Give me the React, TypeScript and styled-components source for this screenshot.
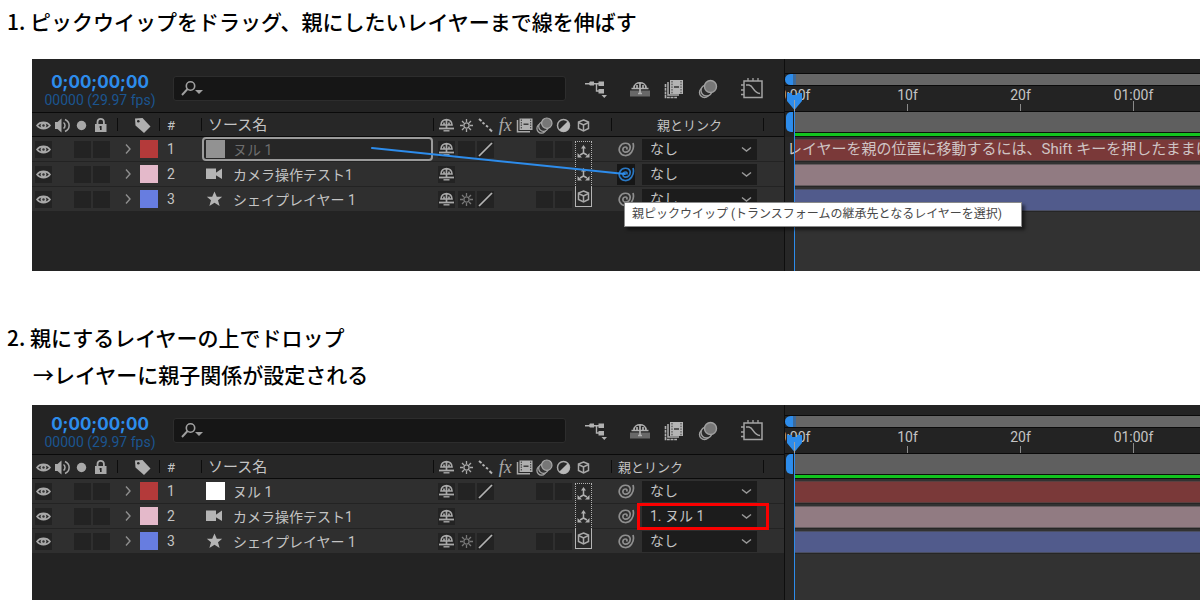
import React from "react";
import styled, { createGlobalStyle, css } from "styled-components";

const GlobalStyle = createGlobalStyle`
  *, *::before, *::after { box-sizing: border-box; }
  body {
    margin: 0;
    background: #fff;
    color: #000;
    font-family: "Noto Sans CJK JP", "Noto Sans", sans-serif;
  }
  button, input, select { font: inherit; color: inherit; margin: 0; padding: 0; border: 0; background: none; }
  svg { display: block; }
`;

const UI_FONT = `Roboto, "Noto Sans CJK JP", sans-serif`;
const BLUE = "#2d8ceb";
const ICON = "#a9a9a9";

/* ---------- page ---------- */

const Page = styled.main`
  height: 100vh;
  overflow: hidden;
`;

const Caption = styled.h2`
  margin: 0;
  padding-left: 7px;
  font-size: 21px;
  font-weight: 500;
  line-height: 36px;
`;

const FirstStep = styled.section`
  padding-top: 3px;
`;

const SecondStep = styled.section`
  margin-top: 48px;
`;

const Result = styled.p`
  margin: 0;
  padding-left: 33px;
  font-size: 21px;
  font-weight: 500;
  line-height: 38px;
`;

const Panel = styled.div<{ $gap: number; $height: number }>`
  position: relative;
  display: flex;
  min-height: ${(p) => p.$height}px;
  margin: ${(p) => p.$gap}px 0 0 32px;
  background: #232323;
  color: #c4c4c4;
  font-family: ${UI_FONT};
  overflow: hidden;
`;

/* ---------- left pane ---------- */

const LayerPane = styled.div`
  flex: 0 0 753px;
  border-right: 1px solid #0e0e0e;
`;

const Toolbar = styled.div<{ $height: number }>`
  display: flex;
  align-items: flex-end;
  height: ${(p) => p.$height}px;
  padding-bottom: 4px;
  border-bottom: 1px solid #0a0a0a;
`;

const Timecode = styled.div`
  width: 136px;
  text-align: center;
  white-space: nowrap;
`;

const Current = styled.div`
  color: ${BLUE};
  font-family: Inter, sans-serif;
  font-size: 17px;
  font-weight: 700;
  line-height: 20px;
`;

const FrameInfo = styled.div`
  color: #1b5590;
  font-size: 14px;
  line-height: 16px;
`;

const SearchBox = styled.label`
  display: flex;
  align-items: center;
  gap: 4px;
  width: 393px;
  height: 25px;
  margin: 0 19px 7px 5px;
  padding-left: 7px;
  border: 1px solid #2d2d2d;
  border-radius: 3px;
  background: #161616;
`;

const SearchInput = styled.input`
  flex: 1;
  min-width: 0;
  height: 20px;
  font-size: 14px;
  outline: none;
`;

const Tools = styled.div`
  display: flex;
  gap: 22px;
  margin-bottom: 7px;
`;

const ToolGroup = styled.div`
  display: flex;
  gap: 12px;
`;

const ToolButton = styled.button`
  display: grid;
  place-items: center;
  width: 22px;
  height: 25px;
`;

const LayerTable = styled.table`
  width: 752px;
  table-layout: fixed;
  border-spacing: 0;
`;

const HeadCell = styled.th<{ $indent?: number; $size?: number }>`
  height: 24px;
  padding: 2px 0 0 ${(p) => p.$indent ?? 0}px;
  border-bottom: 1px solid #0a0a0a;
  background: linear-gradient(#0c0c0c, #0c0c0c) right center / 1px 13px no-repeat #272727;
  font-size: ${(p) => p.$size ?? 15}px;
  font-weight: 400;
  line-height: 21px;
  text-align: left;
  white-space: nowrap;

  &:last-child { background: #272727; }
`;

const Cell = styled.td<{ $indent?: number }>`
  height: 25px;
  padding: 0 0 0 ${(p) => p.$indent ?? 0}px;
  border-bottom: 1px solid #232323;
  background: #2f2f2f;
  font-size: 14px;
  line-height: 23px;
  white-space: nowrap;
`;

const HeadIcons = styled.div`
  display: flex;
  gap: 2px;
  padding-left: 3px;
`;

const HeadTag = styled.div`
  display: flex;
  justify-content: flex-end;
  padding-right: 9px;
`;

const Toggles = styled.div`
  display: flex;
  gap: 2px;
  padding-left: 3px;
`;

const SwitchGrid = styled.div<{ $height: number }>`
  display: grid;
  grid-template-columns: repeat(8, 1fr);
  align-items: center;
  justify-items: center;
  width: 156px;
  height: ${(p) => p.$height}px;
  margin-left: 3px;
`;

const Switch = styled.button<{ $apart?: boolean }>`
  display: grid;
  place-items: center;
  width: 17px;
  height: 17px;
  background: #232323;
  ${(p) => p.$apart && css`margin-right: 20px;`}
`;

const Blank = styled.span``;

const AxisBox = styled.button<{ $edge: "top" | "middle" | "bottom" }>`
  display: grid;
  place-items: center;
  width: 17px;
  height: ${(p) => (p.$edge === "middle" ? 25 : 20)}px;
  border: 1px dotted #b4b4b4;
  border-top-width: ${(p) => (p.$edge === "top" ? 1 : 0)}px;
  border-bottom-width: ${(p) => (p.$edge === "bottom" ? 1 : 0)}px;
  border-style: ${(p) => (p.$edge === "bottom" ? "solid" : "dotted")};
  background: #292929;
  align-self: ${(p) => (p.$edge === "top" ? "end" : p.$edge === "bottom" ? "start" : "center")};
`;

const LabelCell = styled.div`
  display: flex;
  align-items: center;
  justify-content: flex-end;
  gap: 8px;
  padding-right: 2px;
`;

const ColorLabel = styled.button<{ $color: string }>`
  width: 18px;
  height: 18px;
  background: ${(p) => p.$color};
`;

const Twirl = styled.button`
  width: 8px;
  height: 12px;
`;

const SourceName = styled.div<{ $picked?: boolean }>`
  display: flex;
  align-items: center;
  gap: 8px;
  height: 24px;
  margin-right: 1px;
  padding-left: 2px;
  border: 2px solid ${(p) => (p.$picked ? "#9b9b9b" : "transparent")};
  border-radius: 4px;
  background: ${(p) => (p.$picked ? "#262626" : "transparent")};
  color: ${(p) => (p.$picked ? "#6d6d6d" : "#c4c4c4")};
`;

const LayerName = styled.span`
  padding-top: 2px;
`;

const SourceIcon = styled.span`
  width: 19px;
`;

const Solid = styled.span<{ $color: string }>`
  display: block;
  width: 19px;
  height: 18px;
  background: ${(p) => p.$color};
`;

const ParentCell = styled.div`
  display: flex;
  align-items: center;
  gap: 7px;
  padding-left: 5px;
`;

const PickWhip = styled.button<{ $active?: boolean }>`
  display: grid;
  place-items: center;
  width: 18px;
  height: 21px;
  background: ${(p) => (p.$active ? "#161616" : "transparent")};
`;

const ParentField = styled.div<{ $marked?: boolean }>`
  position: relative;
  display: flex;
  align-items: center;
  width: 115px;
  height: 21px;
  background: #1c1c1c;

  svg { position: absolute; right: 5px; pointer-events: none; }

  ${(p) =>
    p.$marked &&
    css`
      &::after {
        content: "";
        position: absolute;
        inset: -3px -12px -3px -5px;
        border: 3px solid #fa0000;
        pointer-events: none;
      }
    `}
`;

const ParentSelect = styled.select`
  appearance: none;
  width: 100%;
  height: 21px;
  padding-left: 8px;
  font-size: 14px;
  line-height: 21px;
  outline: none;
`;

/* ---------- timeline ---------- */

const Timeline = styled.div`
  position: relative;
  flex: 1;
  min-width: 0;
  display: flex;
  flex-direction: column;
  overflow: hidden;
`;

const TimelineHead = styled.div<{ $height: number }>`
  display: flex;
  flex-direction: column;
  justify-content: flex-end;
  height: ${(p) => p.$height}px;
`;

const Navigator = styled.div`
  display: flex;
  height: 13px;
  border: solid #0a0a0a;
  border-width: 1px 0;
`;

const NavHandle = styled.div`
  width: 8px;
  border-radius: 8px 0 0 8px;
  background: ${BLUE};
`;

const NavEdge = styled.div`
  width: 3px;
  background: #3c6a9c;
`;

const NavTrack = styled.div`
  flex: 1;
  background: #666;
`;

const Ruler = styled.ol`
  display: flex;
  height: 26px;
  margin: 0 0 0 -47px;
  padding: 0;
  border-bottom: 1px solid #0a0a0a;
  list-style: none;
`;

const Mark = styled.li<{ $major?: boolean }>`
  flex: 0 0 113px;
  height: 25px;
  background: linear-gradient(#8a8a8a, #8a8a8a) center bottom / 1px ${(p) => (p.$major ? 10 : 7)}px no-repeat;
  font-size: 14px;
  line-height: 19px;
  text-align: center;
`;

const WorkArea = styled.div`
  display: flex;
  height: 20px;
  padding-left: 1px;
`;

const WorkHandle = styled.div`
  width: 7px;
  margin-right: 2px;
  border-radius: 5px 0 0 5px;
  background: ${BLUE};
`;

const WorkTrack = styled.div`
  flex: 1;
  background: #5f5f5f;
`;

const CacheBar = styled.div`
  height: 5px;
  margin-left: 10px;
  border: solid #0c120c;
  border-width: 1px 0;
  background: #12c41e;
`;

const Tracks = styled.div`
  flex: 1;
  border-left: 9px solid #272727;
  background: #323232;
`;

const Track = styled.div`
  height: 25px;
  padding: 2px 0 0 1px;
  border-bottom: 1px solid #262626;
`;

const Bar = styled.div<{ $color: string }>`
  height: 22px;
  border: solid rgba(70, 70, 70, 0.6);
  border-width: 1px 0;
  background: ${(p) => p.$color};
`;

const Hint = styled.div`
  position: absolute;
  top: 78px;
  left: 2px;
  color: #cfc4c4;
  font-size: 15px;
  line-height: 24px;
  white-space: nowrap;
`;

const Playhead = styled.div<{ $top: number }>`
  position: absolute;
  top: ${(p) => p.$top}px;
  bottom: 0;
  left: 2px;
  width: 15px;
  background: linear-gradient(${BLUE}, ${BLUE}) 7px 16px / 1px 100% no-repeat;
`;

/* ---------- overlays ---------- */

const WhipLine = styled.svg`
  position: absolute;
  left: 338px;
  top: 87px;
`;

const Tooltip = styled.div`
  position: absolute;
  left: 592px;
  top: 143px;
  min-width: 398px;
  padding: 0 7px;
  border: 1px solid #8a8a8a;
  background: #fff;
  box-shadow: 3px 3px 3px rgba(0, 0, 0, 0.5);
  color: #484848;
  font-size: 12px;
  line-height: 23px;
  white-space: nowrap;
`;

/* ---------- icons ---------- */

const Eye = () => (
  <svg width="17" height="17" viewBox="0 0 17 17" fill="none">
    <path d="M2 8.5C5 4.3 12 4.3 15 8.5C12 12.7 5 12.7 2 8.5Z" stroke={ICON} strokeWidth="1.6" />
    <circle cx="8.5" cy="8.5" r="2.9" fill={ICON} />
    <circle cx="8.5" cy="8.5" r="1.2" fill="#333" />
  </svg>
);

const Speaker = () => (
  <svg width="17" height="17" viewBox="0 0 17 17" fill="none" stroke={ICON} strokeWidth="1.5">
    <path d="M1 5H3.500L7.500 1.500V15.500L3.500 12H1Z" fill={ICON} stroke="none" />
    <path d="M9.500 5.500C11.500 7 11.500 10 9.500 11.500M11 2.500C16.500 5 16.500 12 11 14.500" />
  </svg>
);

const Dot = () => (
  <svg width="17" height="17" viewBox="0 0 17 17">
    <circle cx="8.5" cy="8.5" r="4.7" fill={ICON} />
  </svg>
);

const Lock = () => (
  <svg width="17" height="17" viewBox="0 0 17 17">
    <path d="M5.500 8V5a3.200 3.200 0 0 1 6.400 0V8" fill="none" stroke={ICON} strokeWidth="1.8" />
    <rect x="3" y="7" width="11.5" height="8" fill={ICON} />
    <path d="M8.800 9v4M7.500 10h2" stroke="#222" strokeWidth="1.6" />
  </svg>
);

const Tag = () => (
  <svg width="17" height="17" viewBox="0 0 17 17">
    <path d="M1 1.500L8.500 1L16.500 9.500L10 16L1.500 8.500Z" fill="#b0b0b0" />
    <circle cx="4.3" cy="4.3" r="1.3" fill="#272727" />
  </svg>
);

const Shy = () => (
  <svg width="17" height="17" viewBox="0 0 17 17" fill="none" stroke={ICON} strokeWidth="1.7">
    <path d="M3 8C3 0.800 14 0.800 14 8ZM8.500 3V12M6 5.500V8M11 5.500V8" />
    <path d="M1 11.500H16" strokeWidth="1.800" />
    <path d="M5.500 13.800H11.500" strokeWidth="1.400" />
  </svg>
);

const Sun = ({ color = ICON }: { color?: string }) => (
  <svg width="17" height="17" viewBox="0 0 17 17" fill="none" stroke={color} strokeWidth="1.3">
    <circle cx="8.5" cy="8.5" r="2.6" />
    <path d="M8.500 2V5M8.500 12V15M2 8.500H5M12 8.500H15M4 4L6 6M11 11L13 13M13 4L11 6M6 11L4 13" />
  </svg>
);

const DashSlope = () => (
  <svg width="17" height="17" viewBox="0 0 17 17" fill="none" stroke="#b4b4b4" strokeWidth="2">
    <path d="M2 2L4.500 4M5.500 5.500L7.500 7M9 8.500L11 10M12.500 12L15 14.500" />
  </svg>
);

const Slope = () => (
  <svg width="17" height="17" viewBox="0 0 17 17">
    <path d="M2 15L15 2" stroke="#b4b4b4" strokeWidth="1.7" />
  </svg>
);

const Film = () => (
  <svg width="17" height="17" viewBox="0 0 17 17">
    <path d="M1.500 3V14.800H14" fill="none" stroke={ICON} strokeWidth="1.5" />
    <rect x="3.5" y="1.5" width="13" height="11.5" fill="#b0b0b0" />
    <path d="M5.300 2.500V12M14.700 2.500V12" stroke="#3a3a3a" strokeWidth="1" strokeDasharray="1.500 1" />
    <path d="M7.500 7.200H12.500" stroke="#2b2b2b" strokeWidth="1.300" />
  </svg>
);

const MotionBlur = () => (
  <svg width="17" height="17" viewBox="0 0 17 17" stroke={ICON} strokeWidth="1.2">
    <circle cx="5.5" cy="11.5" r="4.6" fill="#333" />
    <circle cx="7.5" cy="9.5" r="4.8" fill="#333" />
    <circle cx="10.8" cy="6.2" r="5.2" fill="#777" />
  </svg>
);

const Adjust = () => (
  <svg width="17" height="17" viewBox="0 0 17 17">
    <circle cx="8.5" cy="8.5" r="6" fill="none" stroke={ICON} strokeWidth="1.5" />
    <path d="M4.200 12.800A6 6 0 0 0 14.500 8.500A6 6 0 0 0 12.800 4.200Z" fill="#b8b8b8" />
  </svg>
);

const Cube = () => (
  <svg width="15" height="15" viewBox="0 0 15 15" fill="none" stroke={ICON} strokeWidth="1.5">
    <path d="M7.500 2L12.500 4V10.500L7.500 13L2.500 10.500V4Z" />
    <path d="M2.500 4.500L7.500 7L12.500 4.500M7.500 7V13" />
  </svg>
);

const Axis = () => (
  <svg width="15" height="15" viewBox="0 0 15 15" fill="#b0b0b0">
    <path d="M7.500 3V9L4 11M7.500 9L11 11" stroke="#b0b0b0" strokeWidth="1.5" fill="none" />
    <path d="M7.500 1L10 4.500H5Z" />
    <path d="M1.500 9V13.500H6ZM13.500 9V13.500H9Z" />
  </svg>
);

const Spiral = ({ color = "#8f8f8f" }: { color?: string }) => (
  <svg width="17" height="17" viewBox="0 0 17 17" fill="none" stroke={color} strokeWidth="1.7">
    <path d="M15 2C17 9 12 15 7 14.500C2 14 0 9 2 5.500C4 1.500 10.500 1 12 5C13 9 9.500 11.800 6.500 11C4 10 4.500 6 7.500 6C9 6 9.500 7.500 8.500 8.500" />
  </svg>
);

const Camera = () => (
  <svg width="17" height="12" viewBox="0 0 17 12" fill="#b4b4b4">
    <path d="M0 0.500H10V11H0ZM9.500 5L16 0.500V11L9.500 7Z" />
  </svg>
);

const Star = () => (
  <svg width="17" height="16" viewBox="0 0 17 16" fill="#b4b4b4">
    <path d="M8.500 0.500L10.800 5.700H16.200L12 9.300L13.600 15L8.500 11.700L3.400 15L5 9.300L0.800 5.700H6.200Z" />
  </svg>
);

const ChevronDown = () => (
  <svg width="11" height="7" viewBox="0 0 11 7" fill="none" stroke="#9a9a9a" strokeWidth="1.4">
    <path d="M1 1.500L5.500 5L10 1.500" />
  </svg>
);

const ChevronRight = () => (
  <svg width="8" height="12" viewBox="0 0 8 12" fill="none" stroke="#8f8f8f" strokeWidth="1.4">
    <path d="M2 1.500L6 6L2 10.500" />
  </svg>
);

const Magnifier = () => (
  <svg width="22" height="17" viewBox="0 0 22 17" fill="none" stroke="#a0a0a0">
    <circle cx="9.5" cy="6" r="4.2" strokeWidth="1.6" />
    <path d="M6.500 9L1 15" strokeWidth="1.9" />
    <path d="M14 10H22L18 14Z" fill="#a0a0a0" stroke="none" />
  </svg>
);

const FlowTree = () => (
  <svg width="22" height="18" viewBox="0 0 22 18" fill="#b0b0b0">
    <path d="M0 3L4 3L5 1.500H9V5.500H5L4 4.500H0ZM13.500 1.500H19V6H13.500ZM13.500 9H19V13.500H13.500ZM16.500 15H22L19.250 18Z" />
    <path d="M8 3.700H14M11.500 4V11H14" fill="none" stroke="#b0b0b0" strokeWidth="1.400" />
  </svg>
);

const HideShy = () => (
  <svg width="22" height="18" viewBox="0 0 22 18">
    <path d="M1 10.500H21V16.500H1Z" fill="#686868" />
    <path d="M5 8C5 1 17 1 17 8M2.500 8.500H19.500M11 3V13.500M8 5V8M14 5V8" fill="none" stroke="#b0b0b0" strokeWidth="1.700" />
    <path d="M9 13.500H13" stroke="#b0b0b0" strokeWidth="1.500" />
  </svg>
);

const FrameBlend = () => (
  <svg width="20" height="20" viewBox="0 0 20 20">
    <path d="M1.500 5V18.500H13" fill="none" stroke="#b0b0b0" strokeWidth="1.600" strokeDasharray="3 0.700" />
    <path d="M4 3V16H15" fill="none" stroke="#b0b0b0" strokeWidth="1.500" />
    <rect x="6" y="1" width="13" height="14" fill="#b4b4b4" />
    <path d="M8 2V15M17 2V15" stroke="#3a3a3a" strokeWidth="1" strokeDasharray="1.500 1.200" />
    <path d="M10 8H15" stroke="#2b2b2b" strokeWidth="1.400" />
  </svg>
);

const BlurAll = () => (
  <svg width="20" height="20" viewBox="0 0 20 20" stroke="#a0a0a0" strokeWidth="1.4">
    <circle cx="6.5" cy="13.5" r="5" fill="#2b2b2b" />
    <circle cx="8.5" cy="11.5" r="5.5" fill="#2b2b2b" />
    <circle cx="12.5" cy="7.5" r="6" fill="#777" />
  </svg>
);

const GraphEditor = () => (
  <svg width="22" height="21" viewBox="0 0 22 21" fill="none" stroke="#a4a4a4">
    <rect x="3" y="3" width="18" height="16.5" strokeWidth="1.5" />
    <path d="M5 7H8C13 8 12 15 19 15.500" strokeWidth="1.5" />
    <path d="M7 0V3M12 0V3M17 0V3M0 7H3M0 12H3M0 16.500H3" strokeWidth="1.3" />
  </svg>
);

const FxText = styled.span`
  font-family: "Liberation Serif", serif;
  font-size: 18px;
  font-style: italic;
  line-height: 17px;
  color: ${ICON};
`;

/* ---------- data ---------- */

type Layer = {
  name: string;
  icon: React.ReactNode;
  color: string;
  bar: string;
  kind: "null" | "camera" | "shape";
};

const makeLayers = (nullColor: string): Layer[] => [
  { name: "ヌル 1", icon: <Solid $color={nullColor} />, color: "#b43a3a", bar: "#7a3939", kind: "null" },
  { name: "カメラ操作テスト1", icon: <Camera />, color: "#e4b9ca", bar: "#917b82", kind: "camera" },
  { name: "シェイプレイヤー 1", icon: <Star />, color: "#677de0", bar: "#515b8c", kind: "shape" },
];

const Switches = ({ kind }: { kind: Layer["kind"] }) => (
  <SwitchGrid $height={24}>
    <Switch aria-label="シャイ"><Shy /></Switch>
    {kind === "camera" ? (
      <>
        <Blank /><Blank /><Blank /><Blank /><Blank /><Blank />
      </>
    ) : (
      <>
        <Switch aria-label="コラップス">{kind === "shape" && <Sun color="#777" />}</Switch>
        <Switch aria-label="画質"><Slope /></Switch>
        <Blank />
        <Blank />
        <Switch aria-label="モーションブラー" />
        <Switch aria-label="調整レイヤー" />
      </>
    )}
    <AxisBox aria-label="3D レイヤー" $edge={kind === "null" ? "top" : kind === "camera" ? "middle" : "bottom"}>
      {kind === "shape" ? <Cube /> : <Axis />}
    </AxisBox>
  </SwitchGrid>
);

type CompProps = {
  gap: number;
  height: number;
  toolbarHeight: number;
  parents: string[];
  dragging?: boolean;
  children?: React.ReactNode;
};

const Comp = ({ gap, height, toolbarHeight, parents, dragging, children }: CompProps) => {
  const layers = makeLayers(dragging ? "#929292" : "#ffffff");
  return (
    <Panel $gap={gap} $height={height}>
      <LayerPane>
        <Toolbar $height={toolbarHeight}>
          <Timecode>
            <Current>0;00;00;00</Current>
            <FrameInfo>00000 (29.97 fps)</FrameInfo>
          </Timecode>
          <SearchBox>
            <Magnifier />
            <SearchInput type="text" aria-label="検索" />
          </SearchBox>
          <Tools>
            <ToolButton aria-label="フローチャート"><FlowTree /></ToolButton>
            <ToolGroup>
              <ToolButton aria-label="シャイを隠す"><HideShy /></ToolButton>
              <ToolButton aria-label="フレームブレンド"><FrameBlend /></ToolButton>
              <ToolButton aria-label="モーションブラー"><BlurAll /></ToolButton>
            </ToolGroup>
            <ToolButton aria-label="グラフエディター"><GraphEditor /></ToolButton>
          </Tools>
        </Toolbar>
        <LayerTable>
          <colgroup>
            {[86, 42, 42, 232, 178, 152, 20].map((w, i) => (
              <col key={i} width={w} />
            ))}
          </colgroup>
          <thead>
            <tr>
              <HeadCell>
                <HeadIcons><Eye /><Speaker /><Dot /><Lock /></HeadIcons>
              </HeadCell>
              <HeadCell><HeadTag><Tag /></HeadTag></HeadCell>
              <HeadCell $indent={7} $size={13}>#</HeadCell>
              <HeadCell $indent={6}>ソース名</HeadCell>
              <HeadCell>
                <SwitchGrid $height={21}>
                  <Shy /><Sun /><DashSlope /><FxText>fx</FxText><Film /><MotionBlur /><Adjust /><Cube />
                </SwitchGrid>
              </HeadCell>
              <HeadCell $indent={dragging ? 45 : 6} $size={13}>親とリンク</HeadCell>
              <HeadCell />
            </tr>
          </thead>
          <tbody>
            {layers.map((layer, i) => (
              <tr key={layer.name}>
                <Cell>
                  <Toggles>
                    <Switch $apart aria-label="表示"><Eye /></Switch>
                    <Switch aria-label="ソロ" />
                    <Switch aria-label="ロック" />
                  </Toggles>
                </Cell>
                <Cell>
                  <LabelCell>
                    <Twirl aria-label="展開"><ChevronRight /></Twirl>
                    <ColorLabel aria-label="ラベル" $color={layer.color} />
                  </LabelCell>
                </Cell>
                <Cell $indent={7}>{i + 1}</Cell>
                <Cell>
                  <SourceName $picked={dragging && i === 0}>
                    <SourceIcon>{layer.icon}</SourceIcon>
                    <LayerName>{layer.name}</LayerName>
                  </SourceName>
                </Cell>
                <Cell><Switches kind={layer.kind} /></Cell>
                <Cell>
                  <ParentCell>
                    <PickWhip aria-label="親ピックウイップ" $active={dragging && i === 1}>
                      <Spiral color={dragging && i === 1 ? "#2a78c4" : undefined} />
                    </PickWhip>
                    <ParentField $marked={parents[i] !== "なし"}>
                      <ParentSelect aria-label="親とリンク" defaultValue={parents[i]}>
                        <option>{parents[i]}</option>
                      </ParentSelect>
                      <ChevronDown />
                    </ParentField>
                  </ParentCell>
                </Cell>
                <Cell />
              </tr>
            ))}
          </tbody>
        </LayerTable>
      </LayerPane>
      <Timeline>
        <TimelineHead $height={toolbarHeight + 24}>
          <Navigator><NavHandle /><NavEdge /><NavTrack /></Navigator>
          <Ruler>
            <Mark>0:00f</Mark>
            <Mark>10f</Mark>
            <Mark>20f</Mark>
            <Mark $major>01:00f</Mark>
          </Ruler>
          <WorkArea><WorkHandle /><WorkTrack /></WorkArea>
          <CacheBar />
        </TimelineHead>
        <Tracks>
          {layers.map((layer) => (
            <Track key={layer.name}><Bar $color={layer.bar} /></Track>
          ))}
        </Tracks>
        {dragging && <Hint>レイヤーを親の位置に移動するには、Shift キーを押したままに</Hint>}
        <Playhead $top={toolbarHeight - 21}>
          <svg width="15" height="19" viewBox="0 0 15 19">
            <path d="M0 1H5V3H10V1H15V9L7.500 18L0 9Z" fill={BLUE} />
            <path d="M7.500 8V19" stroke="#a0a0a0" strokeWidth="1" />
          </svg>
        </Playhead>
      </Timeline>
      {children}
    </Panel>
  );
};

export default function App() {
  return (
    <>
      <GlobalStyle />
      <Page>
        <FirstStep>
          <Caption>1. ピックウイップをドラッグ、親にしたいレイヤーまで線を伸ばす</Caption>
          <Comp gap={20} height={212} toolbarHeight={54} parents={["なし", "なし", "なし"]} dragging>
            <WhipLine width="258" height="32" viewBox="0 0 258 32">
              <path d="M2 2L255 28" stroke={BLUE} strokeWidth="2" strokeLinecap="round" />
            </WhipLine>
            <Tooltip role="tooltip">親ピックウイップ (トランスフォームの継承先となるレイヤーを選択)</Tooltip>
          </Comp>
        </FirstStep>
        <SecondStep>
          <Caption>2. 親にするレイヤーの上でドロップ</Caption>
          <Result>→レイヤーに親子関係が設定される</Result>
          <Comp gap={12} height={212} toolbarHeight={50} parents={["なし", "1. ヌル 1", "なし"]} />
        </SecondStep>
      </Page>
    </>
  );
}
